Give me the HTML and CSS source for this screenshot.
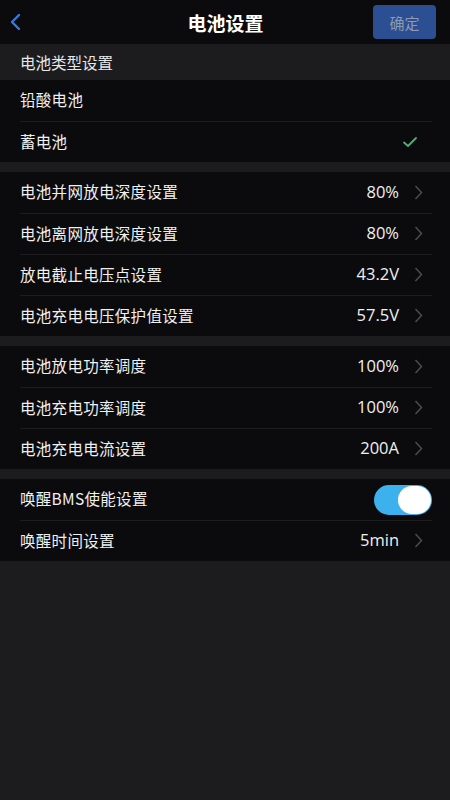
FILE: index.html
```html
<!DOCTYPE html>
<html lang="zh">
<head>
    <meta charset="UTF-8">
    <meta name="viewport" content="width=device-width, initial-scale=1.0">
    <title>电池设置</title>
    <link rel="stylesheet" href="styles.css">
</head>
<body>

<div class="topbar">
  <span class="back">
    <svg width="14" height="18" viewBox="0 0 14 18"><path d="M11 2 L4 9 L11 16" fill="none" stroke="#3a7ae0" stroke-width="2.4" stroke-linecap="round" stroke-linejoin="round"/></svg>
  </span>
  <h1 class="title">电池设置</h1>
  <button class="ok">确定</button>
</div>

<div class="section-head">电池类型设置</div>
<div class="group">
  <div class="row"><span class="label">铅酸电池</span></div>
  <div class="row">
    <span class="label">蓄电池</span>
    <svg class="check" width="16" height="12" viewBox="0 0 16 12"><path d="M2 6.5 L6 10 L14 2" fill="none" stroke="#4fae7c" stroke-width="1.8" stroke-linecap="round" stroke-linejoin="round"/></svg>
  </div>
</div>

<div class="spacer"></div>
<div class="group">
  <div class="row"><span class="label">电池并网放电深度设置</span><span class="value">80%</span><svg class="arrow" width="9" height="15" viewBox="0 0 9 15"><path d="M1.5 1 L7.5 7.5 L1.5 14" fill="none" stroke="#4c4c50" stroke-width="1.5"/></svg></div>
  <div class="row"><span class="label">电池离网放电深度设置</span><span class="value">80%</span><svg class="arrow" width="9" height="15" viewBox="0 0 9 15"><path d="M1.5 1 L7.5 7.5 L1.5 14" fill="none" stroke="#4c4c50" stroke-width="1.5"/></svg></div>
  <div class="row"><span class="label">放电截止电压点设置</span><span class="value">43.2V</span><svg class="arrow" width="9" height="15" viewBox="0 0 9 15"><path d="M1.5 1 L7.5 7.5 L1.5 14" fill="none" stroke="#4c4c50" stroke-width="1.5"/></svg></div>
  <div class="row"><span class="label">电池充电电压保护值设置</span><span class="value">57.5V</span><svg class="arrow" width="9" height="15" viewBox="0 0 9 15"><path d="M1.5 1 L7.5 7.5 L1.5 14" fill="none" stroke="#4c4c50" stroke-width="1.5"/></svg></div>
</div>

<div class="spacer"></div>
<div class="group">
  <div class="row"><span class="label">电池放电功率调度</span><span class="value">100%</span><svg class="arrow" width="9" height="15" viewBox="0 0 9 15"><path d="M1.5 1 L7.5 7.5 L1.5 14" fill="none" stroke="#4c4c50" stroke-width="1.5"/></svg></div>
  <div class="row"><span class="label">电池充电功率调度</span><span class="value">100%</span><svg class="arrow" width="9" height="15" viewBox="0 0 9 15"><path d="M1.5 1 L7.5 7.5 L1.5 14" fill="none" stroke="#4c4c50" stroke-width="1.5"/></svg></div>
  <div class="row"><span class="label">电池充电电流设置</span><span class="value">200A</span><svg class="arrow" width="9" height="15" viewBox="0 0 9 15"><path d="M1.5 1 L7.5 7.5 L1.5 14" fill="none" stroke="#4c4c50" stroke-width="1.5"/></svg></div>
</div>

<div class="spacer"></div>
<div class="group">
  <div class="row"><span class="label">唤醒BMS使能设置</span><span class="toggle"><span class="knob"></span></span></div>
  <div class="row"><span class="label">唤醒时间设置</span><span class="value">5min</span><svg class="arrow" width="9" height="15" viewBox="0 0 9 15"><path d="M1.5 1 L7.5 7.5 L1.5 14" fill="none" stroke="#4c4c50" stroke-width="1.5"/></svg></div>
</div>

</body>
</html>
```

FILE: styles.css
```css
body {
  margin: 0;
  background: #1c1c1e;
  color: #fff;
  font-family: "Noto Sans CJK SC", "Noto Sans", sans-serif;
}

.topbar {
  height: 44px;
  background: #0b0b0d;
  display: flex;
  align-items: center;
  padding: 0 14px 0 8px;
}

.back {
  display: flex;
  align-items: center;
}

.title {
  flex: 1;
  margin: 0;
  text-align: center;
  font-size: 19px;
  font-weight: 700;
  padding-left: 56px;
}

.ok {
  width: 63px;
  height: 34px;
  background: #2b4f92;
  color: #8e9ab0;
  border: none;
  border-radius: 4px;
  font-size: 15px;
  font-family: inherit;
  padding: 0;
}

.section-head {
  height: 36px;
  line-height: 36px;
  padding-left: 20px;
  font-size: 15.5px;
  color: #e8e8e8;
}

.group {
  background: #0b0b0d;
}

.spacer {
  height: 10px;
}

.row {
  height: 41px;
  margin: 0 18px 0 20px;
  padding-bottom: 3px;
  display: flex;
  align-items: center;
  border-top: 1px solid #1d1d20;
  box-sizing: border-box;
  font-size: 15.5px;
}

.row:first-child {
  border-top: none;
}

.label {
  flex: 1;
  color: #f0f0f0;
  letter-spacing: 0.3px;
}

.value {
  font-family: "Open Sans", "Noto Sans", sans-serif;
  font-size: 16.5px;
  color: #f0f0f0;
}

.arrow {
  margin: 2px 9px 0 15px;
}

.check {
  margin: 3px 14px 0 0;
}

.toggle {
  width: 58px;
  height: 30px;
  border-radius: 15px;
  background: #3db0ee;
  display: flex;
  align-items: center;
  justify-content: flex-end;
  padding: 1px;
  box-sizing: border-box;
  margin-top: 3px;
}

.knob {
  width: 33px;
  height: 28px;
  border-radius: 14px;
  background: #fff;
}
```
